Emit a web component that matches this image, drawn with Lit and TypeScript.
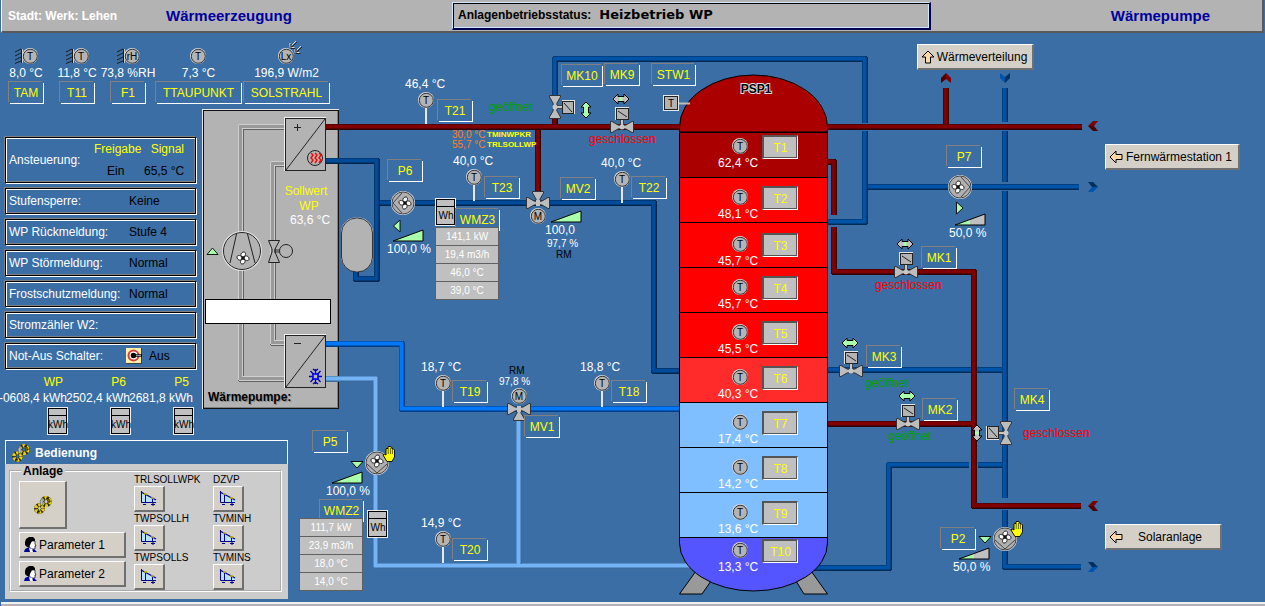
import { LitElement, html, svg, css } from "lit";
import { customElement } from "lit/decorators.js";
import { styleMap } from "lit/directives/style-map.js";

/* Drawing coordinates are those of the whole screen; the canvas begins below the header. */
const TOP = 33;

type Tag = [label: string, x: number, y: number, w?: number];

const TAGS: Tag[] = [
  ["T21", 437, 99], ["MK10", 561, 64, 42], ["MK9", 604, 63], ["STW1", 651, 63, 45],
  ["P6", 387, 159], ["T23", 484, 176], ["MV2", 560, 177], ["T22", 631, 176],
  ["WMZ3", 455, 208, 45], ["WMZ2", 319, 499, 45], ["P5", 312, 430],
  ["T19", 452, 380], ["T18", 611, 380], ["MV1", 524, 415], ["T20", 452, 538],
  ["MK1", 921, 246], ["MK3", 866, 345], ["MK2", 922, 398], ["MK4", 1014, 388],
  ["P2", 940, 527], ["P7", 946, 145],
];

const TANK = [
  { name: "T1", value: "62,4 °C", y: 146 },
  { name: "T2", value: "48,1 °C", y: 197 },
  { name: "T3", value: "45,7 °C", y: 244 },
  { name: "T4", value: "45,7 °C", y: 287 },
  { name: "T5", value: "45,5 °C", y: 332 },
  { name: "T6", value: "40,3 °C", y: 377 },
  { name: "T7", value: "17,4 °C", y: 422 },
  { name: "T8", value: "14,2 °C", y: 467 },
  { name: "T9", value: "13,6 °C", y: 512 },
  { name: "T10", value: "13,3 °C", y: 550 },
];

const LAYERS = ["#aa0000", "#ff0000", "#ff0000", "#ff0000", "#ff0000", "#ff2a2a", "#80bfff", "#80bfff", "#80bfff"];

const STATUS = [
  ["Stufensperre:", "Keine"],
  ["WP Rückmeldung:", "Stufe 4"],
  ["WP Störmeldung:", "Normal"],
  ["Frostschutzmeldung:", "Normal"],
  ["Stromzähler W2:", ""],
];

const place = (x: number, y: number, w?: number) =>
  styleMap({ left: `${x}px`, top: `${y - TOP}px`, ...(w ? { width: `${w}px` } : {}) });

/* ---- diagram symbols ---- */

const pipe = (kind: string, d: string) => svg`
  <g class="pipe ${kind}">
    <path class="edge" d=${d} />
    <path class="rim" d=${d} transform="translate(-.5 -.5)" />
    <path class="core" d=${d} transform="translate(-.5 -.5)" />
  </g>`;

const bulb = (x: number, y: number, letter = "T") => svg`
  <g transform="translate(${x} ${y})">
    <circle r="8" fill="#d8d8d8" />
    <circle cx=".3" cy=".3" r="7" fill="#b4b4b4" stroke="#333" />
    <text class="letter" x="0" y="4">${letter}</text>
  </g>`;

const sensor = (x: number, y: number) => svg`
  <path d="M${x} ${y + 7}V${y + 24}" stroke="#e8e8e8" stroke-width="2" />
  ${bulb(x, y)}`;

const FAN = "M-1 -1C-3 -3 -2 -6 1 -6C3 -6 3 -3 1 -1ZM1 -1C3 -3 6 -2 6 1C6 3 3 3 1 1ZM1 1C3 3 2 6 -1 6C-3 6 -3 3 -1 1ZM-1 1C-3 3 -6 2 -6 -1C-6 -3 -3 -3 -1 -1Z";
const fan = svg`<path d=${FAN} fill="#fff" stroke="#111" stroke-width=".9" /><circle r="1.7" fill="#111" />`;

const pump = (x: number, y: number, turn: number) => svg`
  <g transform="translate(${x} ${y})">
    <circle r="12" fill="#ddd" />
    <circle r="11" fill="#b0b0b0" stroke="#444" />
    <path transform="rotate(${turn})" d="M1 -10L10 0L1 10" fill="none" stroke="#444" />
    <g transform="rotate(${turn}) translate(-2 0) rotate(${-turn})">${fan}</g>
  </g>`;

const WING = "M0 -1.5L4 -2L10 -5.5H11.500V5.500H10L4 2L0 1.500Z";
const wing = (turn: number) => svg`<path transform="rotate(${turn})" d=${WING} fill="#bdbdbd" stroke="#333" />`;

const flap = (x: number, y: number, turn = 0) => svg`
  <g transform="translate(${x} ${y}) rotate(${turn})">
    <path d="M-1.500 0V-8H1.500V0Z" fill="#c8c8c8" stroke="#444" />
    ${wing(0)}${wing(180)}
    <circle r="2.500" fill="#c8c8c8" />
    <rect x="-7" y="-20" width="14" height="13" fill="#e4e4e4" />
    <rect x="-5.500" y="-18.500" width="12" height="11" fill="#b4b4b4" stroke="#222" />
    <path d=${turn ? "M-4 -9L5 -17" : "M-4 -16L5 -10"} stroke="#222" />
  </g>`;

const threeWay = (x: number, y: number, motorBelow: boolean) => svg`
  <g transform="translate(${x} ${y})">
    ${wing(0)}${wing(180)}${wing(motorBelow ? -90 : 90)}
    <rect x="-2" y="-3" width="4" height="6" fill="#c4c4c4" />
  </g>
  ${bulb(x, motorBelow ? y + 13 : y - 13, "M")}`;

const ARROW = "M-8 0L-3 -5V-2.500H3V-5L8 0L3 5V2.500H-3V5Z";
const travel = (x: number, y: number, open: boolean, turn = 0) => svg`
  <g transform="translate(${x} ${y}) rotate(${turn})">
    <path d=${ARROW} fill=${open ? "#aaffaa" : "#c0c0c0"} stroke="#000" />
    ${open ? "" : svg`<rect x="-1.500" y="-2" width="3" height="4" fill="#aaffaa" />`}
  </g>`;

const ramp = (x: number, y: number, half = false) => svg`
  <path d="M${x} ${y}L${x + 30} ${y - 11}V${y}Z" fill=${half ? "#c0c0c0" : "#aaffaa"} />
  ${half ? svg`<path d="M${x} ${y}L${x + 15} ${y - 5.5}V${y}Z" fill="#aaffaa" />` : ""}
  <path d="M${x} ${y}L${x + 30} ${y - 11}V${y}Z" fill="none" stroke="#000" />`;

const marker = (d: string) => svg`<path d=${d} fill="#aaffaa" stroke="#000" stroke-width=".9" />`;

const hand = (x: number, y: number) => svg`
  <g transform="translate(${x} ${y})">
    <path d="M3 14L0 9L1 8L3 9V3L4 2L5 3V1L6 0L7 1L8 .5L9 2V3L10 2.500L11.500 4V11L9 15.500H4Z" fill="#ffff00" stroke="#000" stroke-width=".9" />
    <path d="M5.200 3V8M7.400 2V8M9.400 3V8" stroke="#000" stroke-width=".6" />
  </g>`;

const meter = (x: number, y: number, unit: string) => svg`
  <g transform="translate(${x} ${y})">
    <rect width="21" height="28" fill="#eee" />
    <rect x="1.500" y="1.500" width="18" height="25" fill="#c0c0c0" stroke="#000" />
    <path d="M1 8.500H20" stroke="#000" />
    <text class="unit" x="11" y="21">${unit}</text>
  </g>`;

const chevron = (x: number, y: number, turn: number, hot: boolean) => svg`
  <g transform="translate(${x} ${y}) rotate(${turn})">
    <path d="M-5 -5H0L5 0H-1Z" fill=${hot ? "#500000" : "#003060"} />
    <path d="M-5 5H0L5 0H-1Z" fill=${hot ? "#800000" : "#0055aa"} />
  </g>`;

/* ---- small icons used in buttons ---- */

const arrowIcon = (turn: number) => html`
  <svg class="icon" width="14" height="14" viewBox="0 0 14 14" aria-hidden="true">
    <path transform="rotate(${turn} 7 7)" d="M1 7L7 1V4.500H13V9.500H7V13Z" fill="#ffd8a8" stroke="#000" />
  </svg>`;

const gearsIcon = (size: number) => html`
  <svg class="icon" width=${size} height=${size} viewBox="0 0 20 20" aria-hidden="true">
    <g fill="none">
      <circle cx="6.500" cy="13.500" r="3.400" stroke="#222" stroke-width="4" />
      <circle cx="6.500" cy="13.500" r="3.600" stroke="#e6d200" stroke-width="3.400" stroke-dasharray="2.500 1.300" />
      <circle cx="13" cy="6.500" r="3.600" stroke="#222" stroke-width="4" />
      <circle cx="13" cy="6.500" r="3.800" stroke="#e6d200" stroke-width="3.400" stroke-dasharray="2.600 1.400" />
      <path d="M7 6L10 3V9L8 11Z" fill="#bbb" stroke="#666" stroke-width=".6" />
      <path d="M13 3L16 4V8M4 16L7 17" stroke="#111" />
    </g>
  </svg>`;

const personIcon = html`
  <svg class="icon" width="14" height="16" viewBox="0 0 14 16" aria-hidden="true">
    <path d="M5 4H11V7L12 9H11V12H7L5 9Z" fill="#fff" stroke="#000" stroke-width=".7" />
    <path d="M1 5L2 2L5 0H9L11 2V4L8 4L7 6L6 8L5 10H3L1 8Z" fill="#000" />
    <path d="M0 15L1 12L5 10L8 13L10 12L13 15Z" fill="#0000a0" />
    <path d="M5 11L8 12L9 15H6Z" fill="#fff" />
  </svg>`;

const curveIcon = html`
  <svg class="icon" width="18" height="15" viewBox="0 0 18 15" aria-hidden="true">
    <path d="M2 1L16 9V11H2Z" fill="#b8e0ff" />
    <path d="M1.500 0V11.500H16M5.500 4V11M12.500 8V11" fill="none" stroke="#00008b" />
    <path d="M1 1L16 9" stroke="#00008b" stroke-width="1.300" />
    <path d="M4 3H7M11 7H14" stroke="#c8b400" stroke-width="1.500" />
    <path d="M3 13.500H6M11 13.500H15M13 11.500V15" stroke="#00008b" />
  </svg>`;

const emergencyIcon = html`
  <svg class="icon" width="16" height="16" viewBox="0 0 16 16" aria-hidden="true">
    <rect width="16" height="16" fill="#404040" />
    <rect width="15" height="15" fill="#fff2a8" />
    <circle cx="7.500" cy="7.500" r="5" fill="#fff" stroke="#d04040" stroke-width="2" />
    <circle cx="7.500" cy="7.500" r="2.800" fill="#000" />
    <path d="M8 7.500H16" stroke="#000" stroke-width="2.400" />
    <path d="M10 7.500H15" stroke="#fff" stroke-width=".6" />
  </svg>`;

const wall = svg`
  <path d="M7.500 7V21M1 10L7 7M1 14L7 11M1 18L7 15M1 21.500L7 19" stroke="#1c1c1c" fill="none" />
  <path d="M8.500 7V21" stroke="#ccc" />`;

const RAYS = "M22 0L17 5M16 2V6.500H20.500M27 5L22 10M21 7V11.500H25.500";

const weatherIcon = (kind: "wall" | "plain" | "light", letter: string) => html`
  <svg class="weather" width="24" height="24" viewBox="0 0 24 24" aria-hidden="true">
    ${kind === "wall" ? wall : ""}
    ${bulb(kind === "wall" ? 16 : 11, 14, letter)}
    ${kind === "light"
      ? svg`<path d=${RAYS} transform="translate(-1 -1)" fill="none" stroke="#ddd" />
            <path d=${RAYS} fill="none" stroke="#222" />`
      : ""}
  </svg>`;

@customElement("app-root")
export class AppRoot extends LitElement {
  static styles = css`
    :host {
      display: flex;
      flex-direction: column;
      min-height: 100vh;
      box-sizing: border-box;
      background: #3a6ea5;
      font: 12px/14px "Liberation Sans", Arial, sans-serif;
      color: #fff;
      overflow: hidden;
    }
    *, *::before { box-sizing: border-box; }
    button { font: inherit; margin: 0; padding: 0; cursor: pointer; white-space: nowrap; }
    svg { display: block; }

    .bar {
      display: grid;
      grid-template-columns: 158px 286px minmax(0, 479px) 1fr;
      align-items: center;
      height: 33px;
      margin: 0 1px;
      padding-left: 6px;
      background: #b3b3b3;
      border: solid #5a5a5a;
      border-width: 0 2px 2px 0;
      border-left: 1px solid #fff;
      font-weight: bold;
    }
    .title { margin: 0; font-size: 15px; line-height: 18px; color: #0000a0; }
    .end { justify-self: end; padding-right: 52px; }
    .mode {
      display: flex;
      align-items: center;
      gap: 8px;
      height: 28px;
      padding-left: 5px;
      border: solid #000050;
      border-width: 1px 2px 2px 1px;
      border-left-color: #cfe8ff;
      border-top-color: #cfe8ff;
      box-shadow: inset 1px 1px #000, inset -1px -1px #cfe8ff;
      color: #000;
      white-space: nowrap;
    }
    .mode strong { font: bold 13px/16px "DejaVu Sans", Verdana, sans-serif; }

    .plant { position: relative; flex: 1; display: grid; align-content: start; }
    .scheme { grid-area: 1 / 1; overflow: visible; }
    .rail { grid-area: 1 / 1; position: relative; width: 330px; padding-top: 9px; justify-self: start; }
    .foot { height: 4px; margin-left: 1px; background: #b3b3b3; border-top: 2px solid #f0f0f0; }

    .pipe path { fill: none; stroke-linejoin: round; shape-rendering: crispEdges; }
    .edge { stroke-width: 6; }
    .rim { stroke-width: 5; }
    .core { stroke-width: 3; }
    .hot .edge { stroke: #300000; }
    .hot .rim { stroke: #560000; }
    .hot .core { stroke: #800000; }
    .cold .edge { stroke: #002a54; }
    .cold .rim { stroke: #004080; }
    .cold .core { stroke: #0054a8; }
    .navy .edge { stroke: #00234a; }
    .navy .rim { stroke: #003a76; }
    .navy .core { stroke: #004a98; }
    .brine .edge { stroke: #003f88; }
    .brine .rim { stroke: #0058b8; }
    .brine .core { stroke: #0078f8; }
    .pale .edge { stroke: #3c6a9c; }
    .pale .rim { stroke: #5590cc; }
    .pale .core { stroke: #74b4f4; }
    .gas .edge { stroke: #606060; }
    .gas .rim { stroke: #cfcfcf; }
    .gas .core { stroke: #999; }

    text { font-size: 12px; fill: #fff; }
    .small { font-size: 10px; }
    .tiny { font-size: 8px; font-weight: bold; }
    .yellow { fill: #ffff00; color: #ffff00; }
    .orange { fill: #ff8020; }
    .black { fill: #000; }
    .open { fill: #00a000; }
    .shut { fill: #ff0000; }
    .mid, .letter, .unit { text-anchor: middle; }
    .letter { font-size: 10px; fill: #000; }
    .unit { font-size: 10px; fill: #000; }
    .name { font-weight: bold; fill: #000; }
    .glow { font-weight: bold; fill: #888; }
    .halo { font-weight: bold; fill: #000; stroke: #ddd; stroke-width: 2px; paint-order: stroke; }

    .tag {
      height: 23px;
      border: 0;
      color: #ffff00;
      background:
        linear-gradient(#808080, #808080) 0 0 / calc(100% - 2px) 1px no-repeat,
        linear-gradient(#808080, #808080) 0 0 / 1px calc(100% - 2px) no-repeat,
        linear-gradient(#fff, #fff) 100% 100% / calc(100% - 2px) 1px no-repeat,
        linear-gradient(#fff, #fff) 100% 100% / 1px calc(100% - 2px) no-repeat;
    }
    .node { position: absolute; }
    .std { width: 36px; }
    .probe {
      width: 36px;
      height: 24px;
      background: #c0c0c0;
      color: #ffff00;
      border: 2px solid #555;
      border-right: 1px solid #fff;
      border-bottom: 1px solid #fff;
      box-shadow: inset -1px -1px #555;
    }
    .push {
      display: flex;
      align-items: center;
      background: #d4d0c8;
      color: #000;
      border: solid #fff;
      border-width: 1px 2px 2px 1px;
      border-right-color: #707070;
      border-bottom-color: #707070;
    }
    .link { height: 26px; padding: 0 3px; }
    .link span { flex: 1; text-align: center; }
    .readout { width: 64px; border-collapse: collapse; background: #c0c0c0; font-size: 10px; line-height: 12px; }
    .readout td { height: 18px; padding: 0; border: 1px solid #606060; text-align: center; }
    .field { width: 126px; height: 25px; padding: 0 4px; border: 1px solid #000; background: #fff; border-radius: 0; font: inherit; }

    .sensors { display: grid; grid-template-columns: 51px 51px 45px 88px 87px; padding-left: 8px; }
    .sensor { display: flex; flex-direction: column; align-items: center; white-space: nowrap; width: 36px; }
    .wide { width: 87px; }
    .sensor .tag { align-self: stretch; margin-top: 1px; }
    .weather { overflow: visible; }

    .states { display: grid; gap: 5px; width: 191px; margin: 33px 0 0 5px; }
    .state {
      display: grid;
      grid-template-columns: 120px 1fr;
      align-items: center;
      height: 26px;
      padding-left: 3px;
      border: 1px solid #000;
      box-shadow: inset 1px 1px #fff, inset -1px -1px #808080, 1px 1px #fff, -1px -1px #808080;
    }
    .state dt, .state dd { margin: 0; }
    .state dd { color: #000; white-space: nowrap; }
    .control { height: 46px; grid-template-columns: 85px 1fr; }
    .signals { display: grid; grid-template-columns: 50px 1fr; row-gap: 8px; }
    .signals .on { padding-left: 13px; }
    .switch { grid-template-columns: 117px 1fr; }
    .aus { display: flex; align-items: center; gap: 7px; }

    .counters { display: grid; grid-template-columns: 67px 63px 63px; margin: 6px 0 5px; }
    .counter { display: flex; flex-direction: column; align-items: flex-end; white-space: nowrap; row-gap: 2px; }
    .counter .yellow { padding-right: 4px; }
    .counter svg { margin-right: -1px; overflow: visible; }

    .panel { width: 283px; margin-left: 5px; background: #ccc; color: #000; padding-bottom: 7px; }
    .panel h2 {
      display: flex;
      align-items: center;
      gap: 4px;
      height: 24px;
      margin: 0 0 5px;
      padding-left: 5px;
      border: solid #fff;
      border-width: 1px 1px 0 1px;
      background: #3a6ea5;
      color: #fff;
      font-size: 12px;
    }
    .group { display: flex; gap: 8px; margin: 0 6px 0 4px; padding: 0 0 0 8px; border: 2px groove #fff; }
    .group legend { margin-left: 2px; padding: 0 2px; font-weight: bold; line-height: 4px; }
    .keys { display: flex; flex-direction: column; align-items: flex-start; gap: 3px; padding-top: 8px; }
    .big { width: 48px; height: 48px; justify-content: center; }
    .param { width: 107px; height: 26px; padding-left: 4px; gap: 1px; }
    .curves { display: grid; grid-template-columns: 79px 60px; align-content: start; }
    .curve { display: grid; justify-items: start; font-size: 10px; line-height: 13px; }
    .curve .push { width: 31px; height: 26px; justify-content: center; }
  `;

  private scheme() {
    return svg`
      ${pipe("cold", "M1005 88V122M1005 131V182M1005 191V498M1005 510V567H1081")}
      ${pipe("cold", "M555 96V59H865V123M865 131V222H827")}
      ${pipe("cold", "M868 187H1079")}
      ${pipe("cold", "M827 370H1002")}
      ${pipe("cold", "M1002 465H978M969 465H889V568H790")}
      ${pipe("hot", "M946 88V126M538 127V195M555 116V126")}
      ${pipe("hot", "M325 127H682M826 127H1082")}
      ${pipe("hot", "M827 162H834V215M834 227V272H974V506H1081")}
      ${pipe("hot", "M827 424H972")}
      ${pipe("navy", "M379 203H654V371H682")}

      <rect x="202" y="109" width="137" height="300" fill="#e8e8e8" />
      <rect x="203.500" y="110.500" width="135" height="298" fill="#b3b3b3" stroke="#111" />
      <path d="M337.500 111V407.500H204" stroke="#808080" fill="none" />
      ${pipe("hot", "M325 127H342")}
      ${pipe("navy", "M325 161H377V279H356V270")}
      ${pipe("brine", "M325 344H402V409H682")}
      ${pipe("pale", "M325 379H376V566H720")}
      ${pipe("pale", "M519 418V564")}
      ${pipe("gas", "M286 127H241V379H286")}
      ${pipe("gas", "M286 164H273V343H286")}
      <rect x="341" y="217.500" width="32" height="54" rx="15" fill="#e0e0e0" />
      <rect x="341.500" y="218" width="31" height="54" rx="15" fill="#b3b3b3" stroke="#333" />

      ${[117, 334].map((y) => svg`
        <rect x="284" y=${y} width="42" height="54" fill="#f0f0f0" />
        <rect x="285.500" y=${y + 1.5} width="40" height="52" fill="#b3b3b3" stroke="#222" />
        <path d="M286 ${y + 53}L325 ${y + 2}" stroke="#222" />`)}
      <path d="M294 127.500H301M297.500 124V131M294 343.500H301" stroke="#222" />
      <circle cx="315" cy="158" r="7.500" fill="#b3b3b3" stroke="#222" />
      <path d="M311 153l2 2l-2 3l2 2l-2 3M315 153l2 2l-2 3l2 2l-2 3M319 153l2 2l-2 3l2 2l-2 3" fill="none" stroke="#ff0000" stroke-width="1.400" />
      <path d="M315.500 369V384M309 376.500H322M310.500 371L320.500 382M320.500 371L310.500 382M313 369L315.500 371L318 369M313 384L315.500 382L318 384" fill="none" stroke="#0000a8" stroke-width="1.300" />
      <rect x="313" y="374" width="5" height="5" fill="#b3b3b3" stroke="#0000ff" stroke-width="1.600" />

      <circle cx="242" cy="251" r="19" fill="#b3b3b3" stroke="#e0e0e0" stroke-width="2" />
      <circle cx="242" cy="251" r="18.500" fill="none" stroke="#222" />
      <path d="M236.500 234L230 263M247.500 234L255 263" stroke="#222" />
      <g transform="translate(243 258)">${fan}</g>
      <path d="M268.500 240.500H279.500L275 249V252L279.500 262.500H268.500L272 252V249Z" fill="#b3b3b3" stroke="#222" />
      <path d="M274 250H280M274 252H280" stroke="#333" />
      <circle cx="286" cy="251" r="6.500" fill="#b3b3b3" stroke="#222" />
      ${marker("M207 254.500L212.500 248L218 254.500Z")}
      <text class="yellow mid" x="306" y="195">Sollwert</text>
      <text class="yellow mid" x="309" y="210">WP</text>
      <text x="290" y="224">63,6 °C</text>
      <text class="glow" x="209" y="402">Wärmepumpe:</text>
      <text class="name" x="208" y="401">Wärmepumpe:</text>

      <g stroke="#000">
        <path d="M696 571L679.500 594H702L711 581ZM811 571L827.500 594H804L796 581Z" fill="#999" />
        <path d="M679.500 132V127A74 52 0 0 1 827.500 127V132Z" fill="#aa0000" />
        ${LAYERS.map((c, i) => svg`<rect x="679.500" y=${132.5 + i * 45} width="148" height="45" fill=${c} />`)}
        <path d="M679.500 537.500H827.500V543A74 48 0 0 1 679.500 543Z" fill="#5555ff" />
      </g>
      <text class="halo mid" x="756" y="93">PSP1</text>
      ${TANK.map((t) => svg`${bulb(740, t.y)}<text x="718" y=${t.y + 21}>${t.value}</text>`)}

      <path d="M678 103.500H690" stroke="#bbb" stroke-width="2" />
      <rect x="663" y="95" width="16" height="16" fill="#e8e8e8" />
      <rect x="664.500" y="96.500" width="13" height="13" fill="#b3b3b3" stroke="#222" />
      <text class="letter" x="671" y="107">T</text>

      ${sensor(426, 100)}<text x="405" y="88">46,4 °C</text>
      ${sensor(474, 177)}<text x="453" y="165">40,0 °C</text>
      ${sensor(622, 179)}<text x="601" y="167">40,0 °C</text>
      ${sensor(443, 383)}<text x="421" y="371">18,7 °C</text>
      ${sensor(602, 383)}<text x="580" y="371">18,8 °C</text>
      ${sensor(443, 539)}<text x="421" y="527">14,9 °C</text>

      <text class="small orange" x="452" y="138">30,0 °C</text>
      <text class="small orange" x="452" y="148">55,7 °C</text>
      <text class="tiny yellow" x="487" y="137">TMINWPKR</text>
      <text class="tiny yellow" x="487" y="147">TRLSOLLWP</text>

      ${flap(622, 127)}${travel(621, 99, false)}<text class="shut" x="589" y="143">geschlossen</text>
      ${flap(555, 107, 90)}${travel(586, 110, true, 90)}<text class="open" x="489" y="111">geöffnet</text>
      ${flap(906, 272)}${travel(905, 244, false)}<text class="shut" x="875" y="289">geschlossen</text>
      ${flap(851, 371)}${travel(850, 343, true)}<text class="open" x="865" y="387">geöffnet</text>
      ${flap(908, 424)}${travel(907, 396, true)}<text class="open" x="888" y="440">geöffnet</text>
      ${flap(1006, 433, -90)}${travel(977, 433, false, 90)}<text class="shut" x="1023" y="437">geschlossen</text>

      ${threeWay(538, 203, true)}${ramp(551, 222)}
      <text x="545" y="234">100,0</text>
      <text class="small" x="547" y="247">97,7 %</text>
      <text class="small black" x="556" y="258">RM</text>
      ${threeWay(519, 409, false)}
      <text class="small black" x="509" y="374">RM</text>
      <text class="small" x="499" y="385">97,8 %</text>

      ${pump(403, 203, 180)}${marker("M393.500 226L400 220V232Z")}${ramp(393, 241)}<text x="387" y="253">100,0 %</text>
      ${pump(960, 187, 0)}${marker("M956.500 202V214L963 208Z")}${ramp(955, 225, true)}<text x="949" y="237">50,0 %</text>
      ${pump(377, 463, 90)}${marker("M351 461.500H363L357 468Z")}${ramp(332, 483)}${hand(383, 446)}<text x="326" y="495">100,0 %</text>
      ${pump(1005, 539, 90)}${marker("M979 536.500H991L985 543Z")}${ramp(959, 559, true)}${hand(1011, 521)}<text x="953" y="571">50,0 %</text>

      ${meter(435, 198, "Wh")}${meter(367, 510, "Wh")}

      ${chevron(946, 78, -90, true)}${chevron(1005, 78, 90, false)}
      ${chevron(1093, 126, 180, true)}${chevron(1093, 187, 0, false)}
      ${chevron(1093, 506, 180, true)}${chevron(1093, 567, 0, false)}`;
  }

  private readout(name: string, x: number, y: number, rows: string[]) {
    return html`<table class="node readout" aria-label=${name} style=${place(x, y)}>
      <tbody>${rows.map((r) => html`<tr><td>${r}</td></tr>`)}</tbody>
    </table>`;
  }

  private counter(name: string, value: string) {
    return html`<div class="counter">
      <span class="yellow">${name}</span><span>${value}</span>
      <svg width="21" height="28" viewBox="0 0 21 28" aria-hidden="true">${meter(0, 0, "kWh")}</svg>
    </div>`;
  }

  private curve(name: string) {
    return html`<label class="curve">${name}<button class="push">${curveIcon}</button></label>`;
  }

  private rail() {
    return html`<aside class="rail">
      <div class="sensors">
        <div class="sensor">${weatherIcon("wall", "T")}<span>8,0 °C</span><button class="tag">TAM</button></div>
        <div class="sensor">${weatherIcon("wall", "T")}<span>11,8 °C</span><button class="tag">T11</button></div>
        <div class="sensor">${weatherIcon("wall", "rH")}<span>73,8 %RH</span><button class="tag">F1</button></div>
        <div class="sensor wide">${weatherIcon("plain", "T")}<span>7,3 °C</span><button class="tag">TTAUPUNKT</button></div>
        <div class="sensor wide">${weatherIcon("light", "Lx")}<span>196,9 W/m2</span><button class="tag">SOLSTRAHL</button></div>
      </div>
      <dl class="states">
        <div class="state control">
          <dt>Ansteuerung:</dt>
          <dd class="signals">
            <span class="yellow">Freigabe</span><span class="yellow">&nbsp; Signal</span>
            <span class="on">Ein</span><span>65,5 °C</span>
          </dd>
        </div>
        ${STATUS.map(([k, v]) => html`<div class="state"><dt>${k}</dt><dd>${v}</dd></div>`)}
        <div class="state switch"><dt>Not-Aus Schalter:</dt><dd class="aus">${emergencyIcon}Aus</dd></div>
      </dl>
      <div class="counters">
        ${this.counter("WP", "-0608,4 kWh")}${this.counter("P6", "2502,4 kWh")}${this.counter("P5", "2681,8 kWh")}
      </div>
      <section class="panel">
        <h2>${gearsIcon(20)}Bedienung</h2>
        <fieldset class="group">
          <legend>Anlage</legend>
          <div class="keys">
            <button class="push big" aria-label="Anlage">${gearsIcon(20)}</button>
            <button class="push param">${personIcon}Parameter 1</button>
            <button class="push param">${personIcon}Parameter 2</button>
          </div>
          <div class="curves">
            ${["TRLSOLLWPK", "DZVP", "TWPSOLLH", "TVMINH", "TWPSOLLS", "TVMINS"].map((n) => this.curve(n))}
          </div>
        </fieldset>
      </section>
    </aside>`;
  }

  render() {
    return html`
      <header class="bar">
        <span>Stadt: Werk: Lehen</span>
        <h1 class="title">Wärmeerzeugung</h1>
        <div class="mode"><span>Anlagenbetriebsstatus:</span><strong>Heizbetrieb WP</strong></div>
        <p class="title end">Wärmepumpe</p>
      </header>
      <main class="plant">
        <svg class="scheme" width="1265" height="569" viewBox="0 33 1265 569">${this.scheme()}</svg>
        ${this.rail()}
        ${TAGS.map(([label, x, y, w]) => html`<button class="node tag std" style=${place(x, y, w)}>${label}</button>`)}
        ${TANK.map((t) => html`<button class="node probe" style=${place(762, t.y - 11)}>${t.name}</button>`)}
        ${this.readout("WMZ3", 435, 227, ["141,1 kW", "19,4 m3/h", "46,0 °C", "39,0 °C"])}
        ${this.readout("WMZ2", 299, 518, ["111,7 kW", "23,9 m3/h", "18,0 °C", "14,0 °C"])}
        <input class="node field" aria-label="Wärmepumpe" style=${place(205, 299)} />
        <button class="node push link" style=${place(917, 44, 117)}>${arrowIcon(90)}<span>Wärmeverteilung</span></button>
        <button class="node push link" style=${place(1105, 144, 135)}>${arrowIcon(0)}<span>Fernwärmestation 1</span></button>
        <button class="node push link" style=${place(1105, 524, 117)}>${arrowIcon(0)}<span>Solaranlage</span></button>
      </main>
      <footer class="foot"></footer>
    `;
  }
}
